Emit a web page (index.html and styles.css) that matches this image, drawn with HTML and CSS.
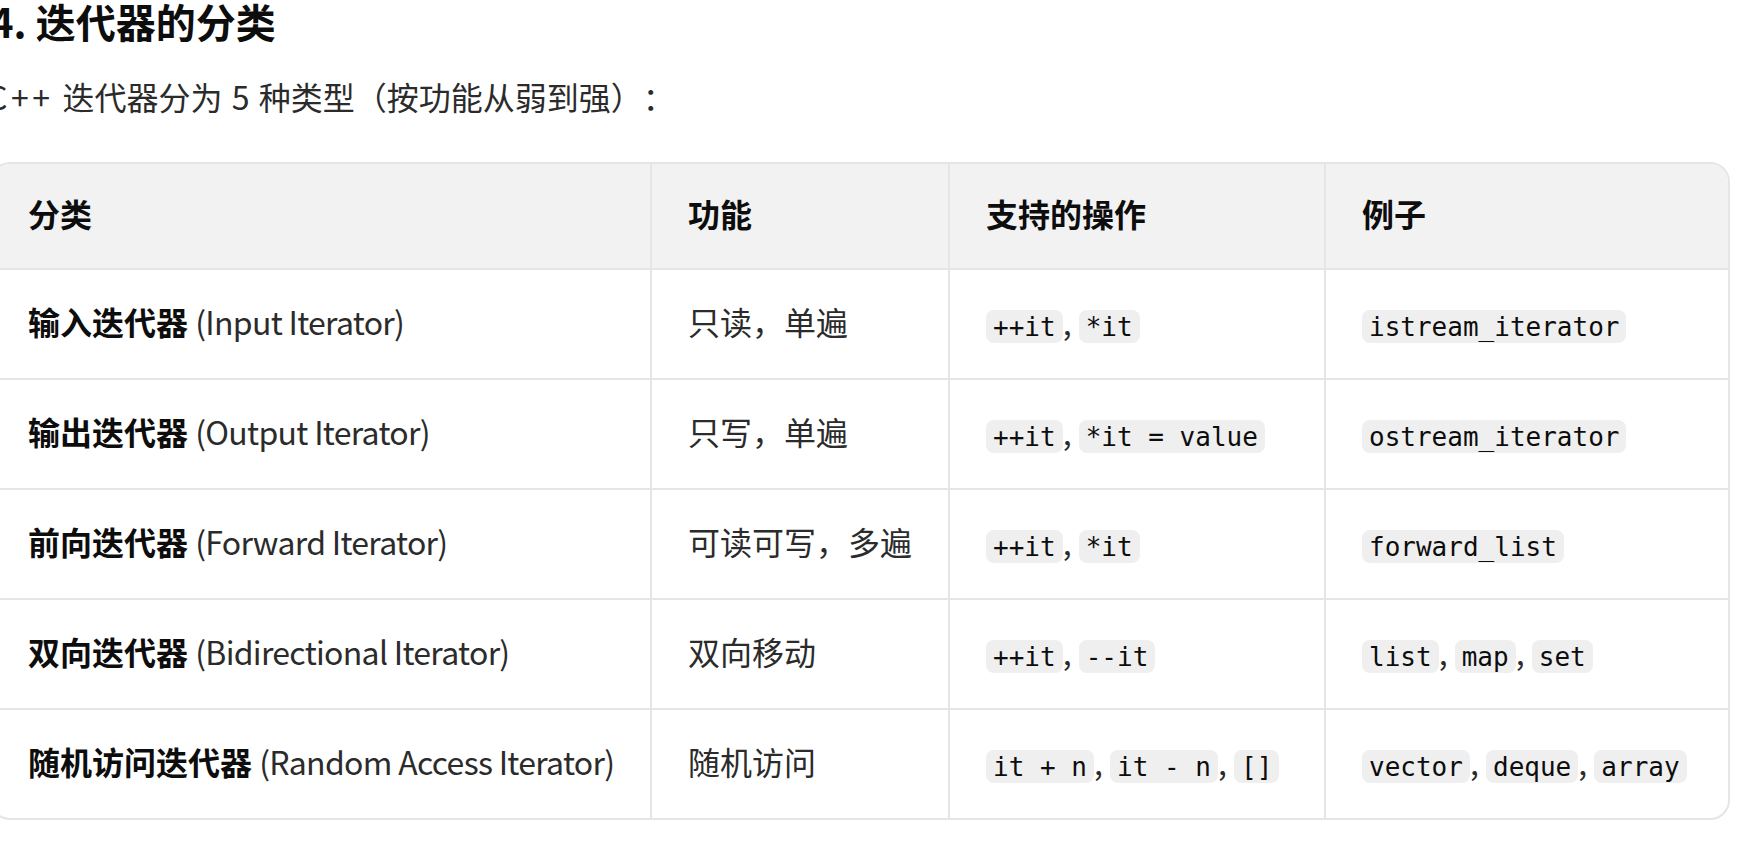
FILE: index.html
```html
<!DOCTYPE html>
<html lang="zh-CN">
<head>
<meta charset="utf-8">
<title>迭代器的分类</title>
<link rel="stylesheet" href="styles.css">
</head>
<body>
<div class="page">
  <h3 class="title">4. 迭代器的分类</h3>
  <p class="intro"><span class="lang">C++</span> 迭代器分为 5 种类型（按功能从弱到强）：</p>
  <div class="table-wrap">
    <table class="grid">
      <colgroup>
        <col class="w1"><col class="w2"><col class="w3"><col class="w4">
      </colgroup>
      <thead>
        <tr><th>分类</th><th>功能</th><th>支持的操作</th><th>例子</th></tr>
      </thead>
      <tbody>
        <tr>
          <td><strong>输入迭代器</strong> <span class="en">(Input Iterator)</span></td>
          <td>只读，单遍</td>
          <td><code>++it</code>, <code>*it</code></td>
          <td><code>istream_iterator</code></td>
        </tr>
        <tr>
          <td><strong>输出迭代器</strong> <span class="en">(Output Iterator)</span></td>
          <td>只写，单遍</td>
          <td><code>++it</code>, <code>*it = value</code></td>
          <td><code>ostream_iterator</code></td>
        </tr>
        <tr>
          <td><strong>前向迭代器</strong> <span class="en">(Forward Iterator)</span></td>
          <td>可读可写，多遍</td>
          <td><code>++it</code>, <code>*it</code></td>
          <td><code>forward_list</code></td>
        </tr>
        <tr>
          <td><strong>双向迭代器</strong> <span class="en">(Bidirectional Iterator)</span></td>
          <td>双向移动</td>
          <td><code>++it</code>, <code>--it</code></td>
          <td><code>list</code>, <code>map</code>, <code>set</code></td>
        </tr>
        <tr>
          <td><strong>随机访问迭代器</strong> <span class="en">(Random Access Iterator)</span></td>
          <td>随机访问</td>
          <td><code>it + n</code>, <code>it - n</code>, <code>[]</code></td>
          <td><code>vector</code>, <code>deque</code>, <code>array</code></td>
        </tr>
      </tbody>
    </table>
  </div>
</div>
</body>
</html>
```

FILE: styles.css
```css
html, body {
  margin: 0;
  padding: 0;
  background: #ffffff;
}
body {
  font-family: "Noto Sans CJK SC", "Noto Sans", sans-serif;
  color: #2b2b2b;
  overflow: hidden;
  text-spacing-trim: space-all;
}
.page {
  margin-left: -10px;
  width: 1740px;
}
.title {
  margin: 0;
  font-size: 40px;
  line-height: 42px;
  font-weight: 700;
  color: #0d0d0d;
}
.intro {
  margin: 30px 0 0 -3px;
  font-size: 32px;
  line-height: 48px;
  word-spacing: 2px;
}
.lang {
  letter-spacing: 3.5px;
}
.table-wrap {
  margin-top: 42px;
  border: 2px solid #e5e5e5;
  border-radius: 20px;
  overflow: hidden;
}
.grid {
  width: 100%;
  table-layout: fixed;
  border-collapse: separate;
  border-spacing: 0;
  font-size: 32px;
  line-height: 48px;
}
.w1 { width: 660px; }
.w2 { width: 298px; }
.w3 { width: 376px; }
.w4 { width: 402px; }
.grid th,
.grid td {
  text-align: left;
  height: 48px;
  padding: 27px 36px 33px;
  border-right: 2px solid #e5e5e5;
  border-bottom: 2px solid #e5e5e5;
  white-space: nowrap;
  vertical-align: middle;
}
.grid th {
  padding: 25px 36px 31px;
  background: #f2f2f2;
  font-weight: 700;
  color: #0d0d0d;
}
.grid th:last-child,
.grid td:last-child {
  border-right: none;
}
.grid tbody tr:last-child td {
  border-bottom: none;
}
.grid strong {
  font-weight: 700;
  color: #0d0d0d;
}
.en {
  letter-spacing: -0.7px;
}
.grid code {
  font-family: "DejaVu Sans Mono", monospace;
  font-size: 26px;
  line-height: 1;
  padding: 1.5px 7px;
  border-radius: 8px;
  background: #efefef;
  color: #0d0d0d;
}
```
